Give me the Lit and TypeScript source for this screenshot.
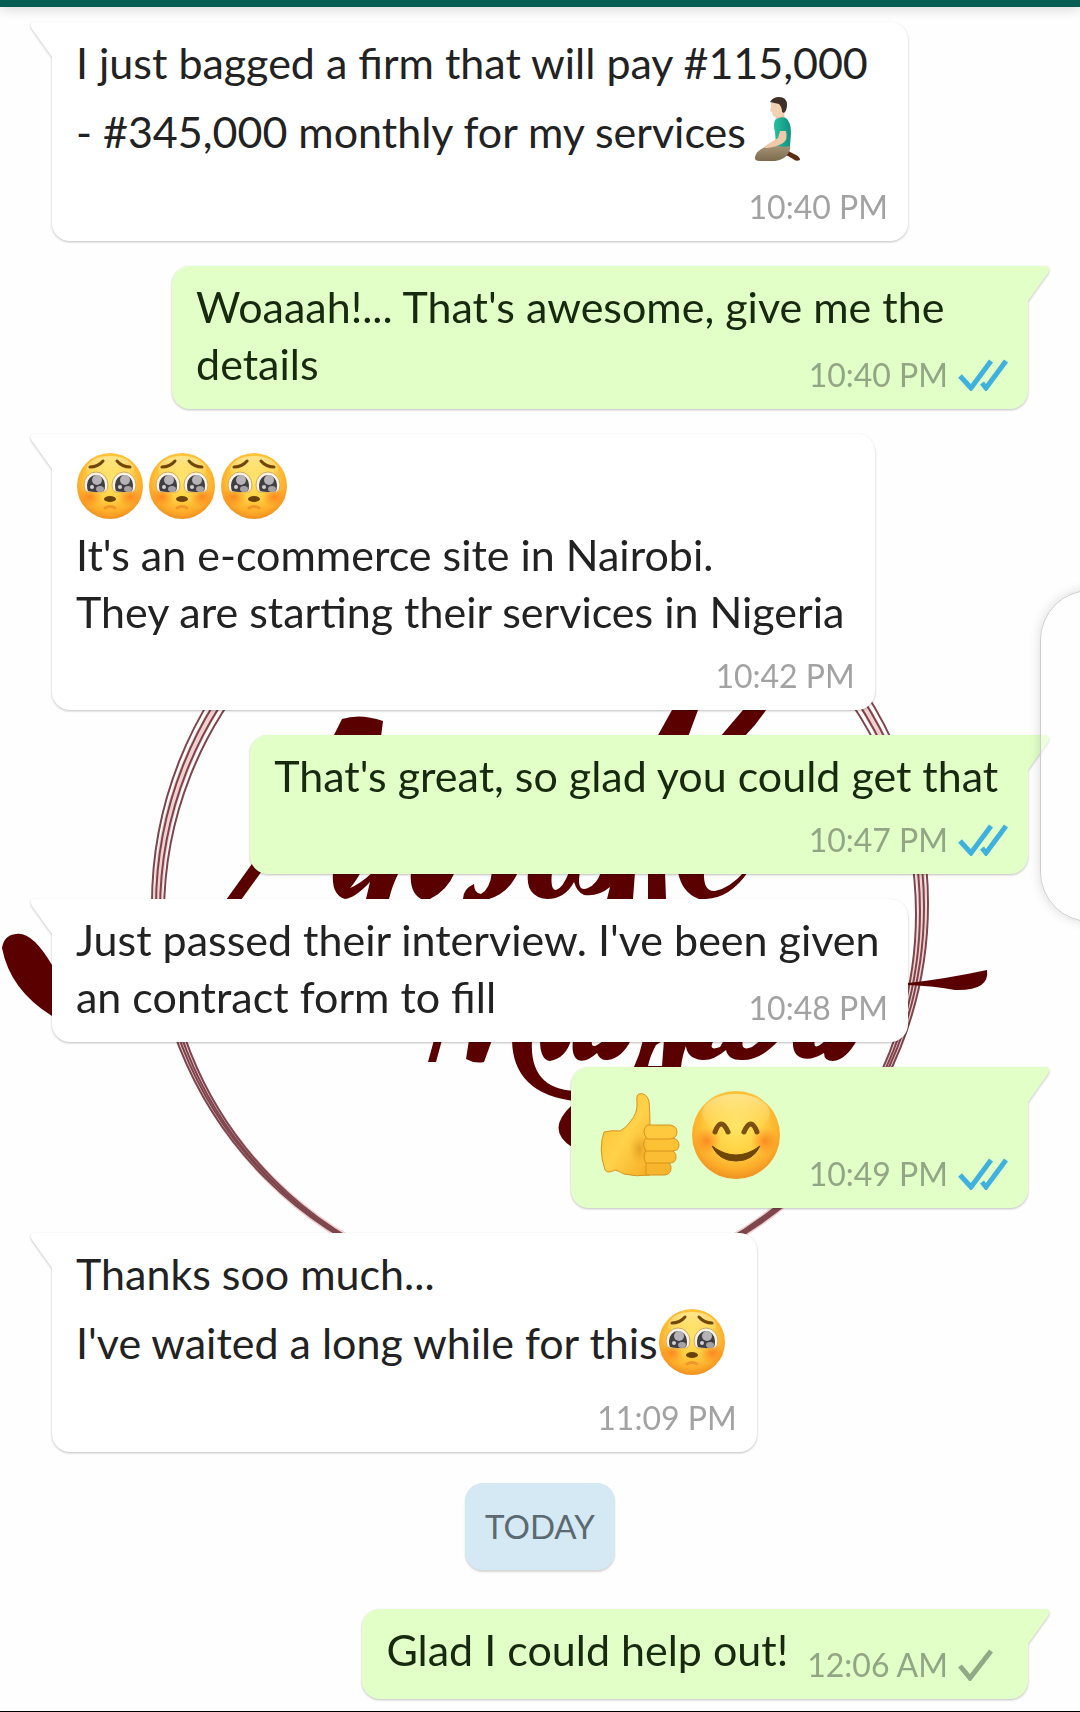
import { LitElement, html, svg, css, nothing } from "lit";
import { customElement, property } from "lit/decorators.js";
import { classMap } from "lit/directives/class-map.js";
import { styleMap } from "lit/directives/style-map.js";

type Emoji = "plead" | "kneel" | "thumb" | "smile";
type Part = string | { emoji: Emoji };

interface Message {
  from: "them" | "me";
  lines: Part[][];
  time: string;
  ticks?: "read" | "sent";
  stacked?: boolean;
  big?: boolean;
  share: number;
}

const plead: Part = { emoji: "plead" };

const yesterday: Message[] = [
  {
    from: "them",
    lines: [["I just bagged a firm that will pay #115,000"], ["- #345,000 monthly for my services", { emoji: "kneel" }]],
    time: "10:40 PM",
    stacked: true,
    share: 87.7,
  },
  {
    from: "me",
    lines: [["Woaaah!... That's awesome, give me the"], ["details"]],
    time: "10:40 PM",
    ticks: "read",
    share: 87.7,
  },
  {
    from: "them",
    lines: [[plead, plead, plead], ["It's an e-commerce site in Nairobi."], ["They are starting their services in Nigeria"]],
    time: "10:42 PM",
    stacked: true,
    share: 84.3,
  },
  {
    from: "me",
    lines: [["That's great, so glad you could get that"]],
    time: "10:47 PM",
    ticks: "read",
    stacked: true,
    share: 79.7,
  },
  {
    from: "them",
    lines: [["Just passed their interview. I've been given"], ["an contract form to fill"]],
    time: "10:48 PM",
    share: 87.7,
  },
  {
    from: "me",
    lines: [[{ emoji: "thumb" }, { emoji: "smile" }]],
    time: "10:49 PM",
    ticks: "read",
    big: true,
    share: 46.8,
  },
  {
    from: "them",
    lines: [["Thanks soo much..."], ["I've waited a long while for this", plead]],
    time: "11:09 PM",
    stacked: true,
    share: 72.2,
  },
];

const today: Message[] = [
  { from: "me", lines: [["Glad I could help out!"]], time: "12:06 AM", ticks: "sent", share: 68.2 },
];

const faceFill = svg`
  <defs>
    <radialGradient id="face" cx="50%" cy="40%" r="62%">
      <stop offset="0" stop-color="#ffe566"/>
      <stop offset=".5" stop-color="#ffd041"/>
      <stop offset=".8" stop-color="#fdac2a"/>
      <stop offset="1" stop-color="#ec8b20"/>
    </radialGradient>
    <linearGradient id="shine" x1="0" y1="0" x2="0" y2="1">
      <stop offset="0" stop-color="#fff0b0" stop-opacity=".7"/>
      <stop offset="1" stop-color="#ffe680" stop-opacity="0"/>
    </linearGradient>
    <radialGradient id="blush">
      <stop offset="0" stop-color="#fb7a1c" stop-opacity=".8"/>
      <stop offset="1" stop-color="#fb8a1c" stop-opacity="0"/>
    </radialGradient>
  </defs>`;

const pictures = {
  plead: html`<svg class="emoji" viewBox="0 0 72 72" role="img" aria-label="pleading face">
    ${faceFill}
    <circle cx="36" cy="36" r="33" fill="url(#face)"/>
    <ellipse cx="36" cy="20" rx="24" ry="14" fill="url(#shine)"/>
    <ellipse cx="16" cy="47" rx="13" ry="10" fill="url(#blush)"/>
    <ellipse cx="56" cy="47" rx="13" ry="10" fill="url(#blush)"/>
    <path d="M10 35a12 13 0 0 1 24 0q0 5-3 7H13q-3-2-3-7zM38 35a12 13 0 0 1 24 0q0 5-3 7H41q-3-2-3-7z" fill="#fbf3e6" stroke="#d8a75c" stroke-width="1"/>
    <path d="M13 35a9 10 0 0 1 18 0q0 4-1 6q-8 2-16 0q-1-2-1-6zM41 35a9 10 0 0 1 18 0q0 4-1 6q-8 2-16 0q-1-2-1-6z" fill="#404044"/>
    <circle cx="23" cy="30" r="5" fill="#b5b3b6"/>
    <circle cx="51" cy="30" r="5" fill="#b5b3b6"/>
    <circle cx="18" cy="37" r="2" fill="#d2d0d2"/>
    <circle cx="46" cy="37" r="2" fill="#d2d0d2"/>
    <ellipse cx="26" cy="39" rx="4" ry="3" fill="#a5a2a5"/>
    <ellipse cx="54" cy="39" rx="4" ry="3" fill="#a5a2a5"/>
    <path d="M16 17q8 0 13-6M56 17q-8 0-13-6" fill="none" stroke="#70470d" stroke-width="3" stroke-linecap="round"/>
    <ellipse cx="36" cy="49" rx="6" ry="3" fill="#69420a"/>
    <path d="M31 58q5-3 10 0" fill="none" stroke="#f0962a" stroke-width="3" stroke-linecap="round"/>
  </svg>`,
  kneel: html`<svg class="emoji" viewBox="0 0 72 72" role="img" aria-label="man kneeling">
    <defs>
      <linearGradient id="khaki" x1="0" y1="0" x2="0" y2="1"><stop offset="0" stop-color="#b5a386"/><stop offset="1" stop-color="#7c6a4c"/></linearGradient>
      <linearGradient id="shirt" x1="0" y1="0" x2="1" y2="0"><stop offset="0" stop-color="#25c0a0"/><stop offset="1" stop-color="#109080"/></linearGradient>
    </defs>
    <path d="M40 52q5 5 12 8q4 2 4 5q-4 2-7-1q-6-4-14-6z" fill="#5d2a14"/>
    <path d="M11 62q1-6 10-10q8-5 13-7h10q4 7 1 12q-4 8-14 9H16q-6 0-5-4z" fill="url(#khaki)"/>
    <path d="M31 17h9l1 9h-9z" fill="#eec5a4"/>
    <path d="M31 25q5-4 11-2q5 4 5 15l-1 13q-8 2-15-1q1-6 0-13q-2-7 0-12z" fill="url(#shirt)"/>
    <path d="M36 36l6 0q2 9-3 12q-6 4-16 5q-3 0-2-2l13-8z" fill="#f0c9a8"/>
    <path d="M27 8q8-5 13 1q2 9-2 12q-4 2-9 0l-1-4-2-1 1-4z" fill="#f3d2b4"/>
    <path d="M26 7q3-5 9-5q8 0 8 8q0 5-3 8l-2-1q0-5-3-8z" fill="#3f3029"/>
  </svg>`,
  thumb: html`<svg class="emoji" viewBox="0 0 90 90" role="img" aria-label="thumbs up">
    <defs>
      <linearGradient id="hand" x1="0" y1="0" x2="1" y2="1"><stop offset="0" stop-color="#fcbd2c"/><stop offset=".5" stop-color="#ffd24a"/><stop offset="1" stop-color="#f5a920"/></linearGradient>
      <radialGradient id="palm"><stop offset="0" stop-color="#c9820f" stop-opacity=".5"/><stop offset="1" stop-color="#e9a11d" stop-opacity="0"/></radialGradient>
    </defs>
    <g stroke="#d8921c" stroke-width="1" stroke-linejoin="round">
      <path d="M6 42q-6 17 1 38q3 4 10 0q4 1 9 4q12 3 26 1l4-42-4-8q0-13-1-24q-3-9-10-7q-3 1-2 8q1 11-7 20q-4 6-10 9q-8-1-16 1z" fill="url(#hand)"/>
      <path d="M48 72h19q6 0 6 6t-6 7H48z" fill="#f6b52c"/>
      <path d="M48 60h24q6 1 6 7t-6 6H48q-4-6 0-13z" fill="#fbbd33"/>
      <path d="M48 48h26q7 1 7 7t-7 6H48q-5-7 0-13z" fill="#fdc136"/>
      <path d="M49 35h23q7 1 7 7t-7 7H49q-6-8 0-14z" fill="#fec83f"/>
    </g>
    <ellipse cx="41" cy="59" rx="10" ry="16" fill="url(#palm)"/>
  </svg>`,
  smile: html`<svg class="emoji" viewBox="0 0 90 90" role="img" aria-label="smiling face">
    ${faceFill}
    <circle cx="45" cy="45" r="44" fill="url(#face)"/>
    <ellipse cx="45" cy="23" rx="34" ry="19" fill="url(#shine)"/>
    <circle cx="16" cy="51" r="14" fill="url(#blush)"/>
    <circle cx="74" cy="51" r="14" fill="url(#blush)"/>
    <path d="M24 42q6-16 13 0M53 42q7-16 13 0" fill="none" stroke="#7a5012" stroke-width="5" stroke-linecap="round"/>
    <path d="M21 56q24 18 48 0q-7 15-24 15t-24-15z" fill="#6e4708" stroke="#6e4708" stroke-width="1" stroke-linejoin="round"/>
  </svg>`,
};

@customElement("chat-bubble")
export class ChatBubble extends LitElement {
  @property({ attribute: false }) message!: Message;

  static styles = css`
    :host {
      display: flex;
    }
    .bubble {
      position: relative;
      box-sizing: border-box;
      display: grid;
      min-height: 90px;
      padding: 12px 20px 0 24px;
      border-radius: 18px;
      color: #222;
      background: #fff;
      filter: drop-shadow(0 1px 1px rgba(0, 0, 0, 0.25));
    }
    .them {
      border-top-left-radius: 0;
    }
    .me {
      margin-left: auto;
      border-top-right-radius: 0;
      color: #17290f;
      background: #e1ffc7;
    }
    .text {
      grid-area: 1 / 1;
      min-width: 0;
      margin: 0;
      padding-bottom: 17px;
      font-size: 43px;
      line-height: 57px;
      white-space: nowrap;
    }
    .line {
      display: flex;
      align-items: center;
    }
    .tall {
      min-height: 80px;
    }
    .emoji {
      flex: none;
      width: 72px;
      height: 72px;
      margin-left: -2px;
      margin-right: 2px;
    }
    .big .tall {
      min-height: 112px;
    }
    .big .emoji {
      width: 90px;
      height: 90px;
      margin: 0 0 0 3px;
    }
    .meta {
      grid-area: 1 / 1;
      align-self: end;
      justify-self: end;
      display: flex;
      align-items: center;
      gap: 10px;
      padding-bottom: 12px;
      font-size: 32px;
      line-height: 44px;
      color: #a2a2a2;
    }
    .stacked .text {
      padding-bottom: 0;
    }
    .stacked .meta {
      grid-area: 2 / 1;
      padding-top: 14px;
    }
    .me .meta {
      color: #92a584;
    }
    .ticks {
      width: 50px;
      height: 32px;
      fill: none;
      stroke-width: 5;
    }
    .read {
      stroke: #3fb1de;
    }
    .sent {
      stroke: #91a986;
    }
    .tail {
      position: absolute;
      top: 0;
      width: 24px;
      height: 36px;
    }
    .them .tail {
      left: -22px;
      fill: #fff;
    }
    .me .tail {
      right: -22px;
      fill: #e1ffc7;
    }
  `;

  private part(part: Part) {
    return typeof part === "string" ? html`<span>${part}</span>` : pictures[part.emoji];
  }

  private ticks(kind: "read" | "sent") {
    return html`<svg class="ticks ${kind}" viewBox="0 0 50 32" role="img" aria-label=${kind}>
      <path d=${kind === "read" ? "M2 17L13 29L33 2M24 24L28 29L48 2" : "M2 17L12 29L33 2"}></path>
    </svg>`;
  }

  render() {
    const m = this.message;
    const classes = { bubble: true, [m.from]: true, stacked: !!m.stacked, big: !!m.big };
    const tail = m.from === "them" ? "M24 0H4Q-1 1 2 7L22 35H24z" : "M0 0H20Q25 1 22 7L2 35H0z";
    return html`<article class=${classMap(classes)} style=${styleMap({ width: `${m.share}%` })}>
      <svg class="tail" viewBox="0 0 24 36" aria-hidden="true"><path d=${tail}></path></svg>
      <div class="text">
        ${m.lines.map(
          (line) => html`<div class=${classMap({ line: true, tall: line.some((p) => typeof p !== "string") })}>
            ${line.map((p) => this.part(p))}
          </div>`
        )}
      </div>
      <div class="meta"><time>${m.time}</time>${m.ticks ? this.ticks(m.ticks) : nothing}</div>
    </article>`;
  }
}

const rings = [
  { cx: 540, cy: 904, r: 388 },
  { cx: 540, cy: 907, r: 384 },
  { cx: 540, cy: 911, r: 380 },
  { cx: 540, cy: 914, r: 376 },
];

@customElement("chat-wallpaper")
export class ChatWallpaper extends LitElement {
  static styles = css`
    :host {
      display: block;
    }
    .art {
      display: block;
      width: 100%;
    }
    .wash {
      fill: none;
      stroke: #f3d0d0;
      stroke-width: 9;
    }
    .ring {
      fill: none;
      stroke: #7d454c;
      stroke-width: 2;
    }
    .brush {
      fill: #5b0000;
    }
  `;

  render() {
    return html`<svg class="art" viewBox="0 0 1080 1712" aria-hidden="true">
      <circle class="wash" cx="540" cy="909" r="382"></circle>
      ${rings.map((r) => svg`<circle class="ring" cx=${r.cx} cy=${r.cy} r=${r.r}></circle>`)}
      <g class="brush">
        <path d="M333 737L342 719Q360 713 383 721L381 737z"/>
        <path d="M262 850L226 900H241L270 860z"/>
        <path d="M672 710H698L688 737H657z"/>
        <path d="M743 710H766Q757 724 744 737H720z"/>
        <path d="M2 948Q4 935 16 934Q32 931 52 965V1016Q10 990 2 948z"/>
        <path d="M908 983Q945 979 987 970Q990 991 955 990Q935 986 908 985z"/>
        <path d="M333 872H361Q354 884 350 888Q360 884 373 872H399Q392 886 389 899H366L370 882Q355 898 345 899Q331 895 333 872z"/>
        <path d="M411 872H455Q447 891 430 899H421Q409 892 411 872z"/>
        <path d="M463 899Q463 889 474 884Q474 893 481 894Q490 889 492 872H518Q509 893 489 899z"/>
        <path d="M528 872H552Q550 890 556 890Q563 888 569 872H580Q576 893 588 888Q597 884 601 872H635L633 899H607L610 887Q598 897 584 895Q577 892 574 882Q565 899 547 899Q525 897 528 872z"/>
        <path d="M648 872H665L666 899H648z"/>
        <path d="M678 872H704Q703 892 715 891Q730 888 744 872H748Q730 898 706 899H699Q682 893 678 872z"/>
        <path d="M434 1040H442L436 1062H428z"/>
        <path d="M469 1040H492L484 1062Q475 1064 466 1059z"/>
        <path d="M512 1040H532Q529 1089 575 1091V1101Q513 1094 512 1040z"/>
        <path d="M540 1040H571Q566 1058 550 1061Q540 1060 540 1040z"/>
        <path d="M573 1040H592Q590 1052 604 1040H631Q622 1058 608 1060Q600 1061 597 1053Q586 1063 578 1060Q571 1056 573 1040z"/>
        <path d="M643 1040H688Q682 1056 681 1067H634Q640 1054 643 1040zM656 1045Q650 1056 648 1066H662L664 1040z"/>
        <path d="M686 1040H714Q707 1052 720 1047L724 1040H743Q740 1052 752 1047L761 1040H779Q760 1061 741 1060Q728 1060 726 1050Q713 1061 702 1060Q684 1058 686 1040z"/>
        <path d="M793 1040H815Q812 1053 826 1040H857Q846 1060 833 1061Q824 1061 824 1053Q811 1061 802 1058Q792 1055 793 1040z"/>
        <path d="M572 1105Q545 1130 572 1147z"/>
      </g>
    </svg>`;
  }
}

@customElement("app-root")
export class AppRoot extends LitElement {
  static styles = css`
    :host {
      display: block;
      font-family: Lato, "Liberation Sans", sans-serif;
      background: #fefefe;
    }
    .screen {
      position: relative;
      overflow: hidden;
      border-bottom: 1px solid #000;
    }
    .bar {
      height: 7px;
      background: #075e54;
      box-shadow: 0 2px 12px rgba(0, 0, 0, 0.2);
    }
    .wallpaper {
      position: absolute;
      top: 0;
      left: 0;
      width: 100%;
    }
    .thread {
      position: relative;
      display: flex;
      flex-direction: column;
      gap: 25px;
      padding: 15px 52px 12px;
    }
    .day {
      align-self: center;
      margin: 6px 0 14px;
      padding: 20px;
      border-radius: 18px;
      font-size: 33px;
      font-weight: 400;
      line-height: 47px;
      color: #5c6970;
      background: #d4e9f4;
      box-shadow: 0 2px 2px rgba(0, 0, 0, 0.16);
    }
    .edge {
      position: absolute;
      top: 590px;
      right: -60px;
      width: 98px;
      height: 330px;
      border: 1px solid #ccc;
      border-radius: 56px;
      background: rgba(255, 255, 255, 0.4);
      box-shadow: 0 0 12px rgba(0, 0, 0, 0.14);
    }
  `;

  render() {
    return html`<main class="screen">
      <chat-wallpaper class="wallpaper"></chat-wallpaper>
      <div class="bar"></div>
      <section class="thread" aria-label="Messages">
        ${yesterday.map((m) => html`<chat-bubble .message=${m}></chat-bubble>`)}
        <h2 class="day">TODAY</h2>
        ${today.map((m) => html`<chat-bubble .message=${m}></chat-bubble>`)}
      </section>
      <div class="edge" aria-hidden="true"></div>
    </main>`;
  }
}
